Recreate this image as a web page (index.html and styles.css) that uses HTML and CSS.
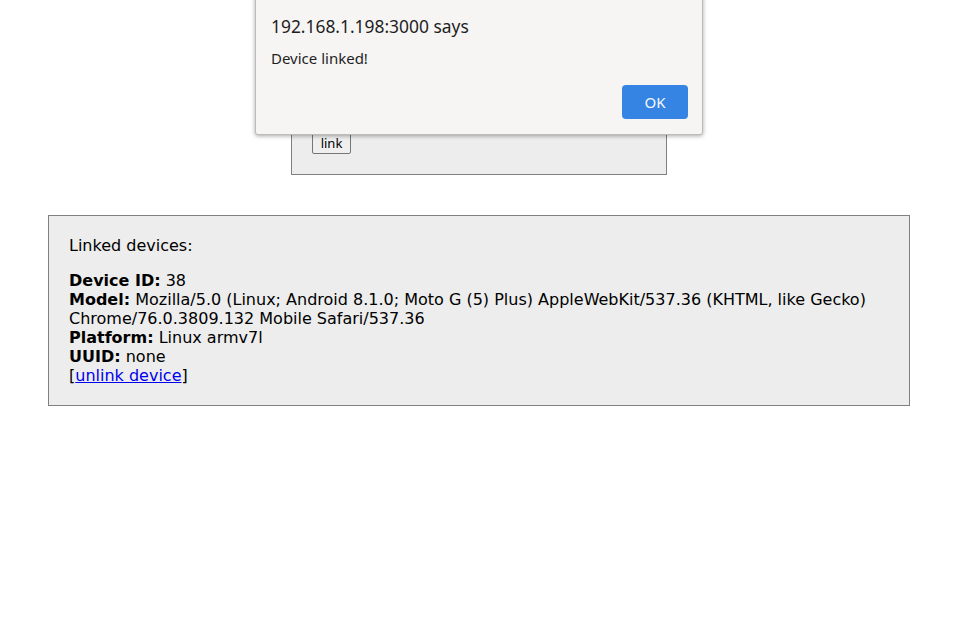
FILE: index.html
```html
<!DOCTYPE html>
<html>
<head>
<meta charset="utf-8">
<title>Devices</title>
<link rel="stylesheet" href="styles.css">
</head>
<body>
  <div class="panel link-panel">
    <p class="intro">Link a new device:</p>
    <input class="code" type="text" value="">
    <button class="btn" type="button">link</button>
  </div>

  <div class="panel devices">
    <p class="intro">Linked devices:</p>
    <div class="device">
      <b>Device ID:</b> 38<br>
      <b>Model:</b> Mozilla/5.0 (Linux; Android 8.1.0; Moto G (5) Plus) AppleWebKit/537.36 (KHTML, like Gecko) Chrome/76.0.3809.132 Mobile Safari/537.36<br>
      <b>Platform:</b> Linux armv7l<br>
      <b>UUID:</b> none<br>
      [<a href="#">unlink device</a>]
    </div>
  </div>

  <div class="dialog">
    <div class="dlg-title">192.168.1.198:3000 says</div>
    <div class="dlg-msg">Device linked!</div>
    <div class="dlg-actions">
      <button class="dlg-ok" type="button">OK</button>
    </div>
  </div>
</body>
</html>
```

FILE: styles.css
```css
html, body {
  margin: 0;
  padding: 0;
  background: #ffffff;
}
body {
  padding: 8px 0 0;
  font-family: "DejaVu Sans", sans-serif;
  font-size: 16px;
  line-height: 19px;
  color: #000;
}
.panel {
  background: #ededed;
  border: 1px solid #808080;
  padding: 20px;
}
.link-panel {
  width: 334px;
  margin: 0 auto;
}
.devices {
  margin: 40px 48px 0;
}
.intro {
  margin: 0 0 16px;
}
.code {
  display: block;
  box-sizing: border-box;
  height: 28px;
  width: 200px;
  margin: 0 0 40px;
}
.btn {
  display: block;
  font-family: "Noto Sans", sans-serif;
  font-size: 13px;
  line-height: 18px;
  padding: 1px 6px 1px;
  background: #efefef;
  border: 1px solid #767676;
  border-radius: 2px;
  color: #000;
  height: 22px;
  width: 39px;
}
a {
  color: #0000ee;
  text-decoration: underline;
}
.dialog {
  position: absolute;
  left: 255px;
  top: -6px;
  width: 448px;
  height: 141px;
  box-sizing: border-box;
  background: #f6f5f4;
  border: 1px solid #bdbbb8;
  border-radius: 0 0 3px 3px;
  box-shadow: 0 1px 4px rgba(0, 0, 0, 0.35);
  font-family: "Noto Sans", sans-serif;
  color: #1e1e1e;
  padding: 0 14px 0 15px;
  display: flex;
  flex-direction: column;
}
.dlg-title {
  margin-top: 18px;
  font-size: 17.4px;
  line-height: 26px;
}
.dlg-msg {
  margin-top: 9px;
  font-size: 15px;
  line-height: 20px;
}
.dlg-actions {
  margin-top: 17px;
  display: flex;
  justify-content: flex-end;
}
.dlg-ok {
  width: 66px;
  height: 34px;
  border: none;
  border-radius: 4px;
  background: #3584e4;
  color: #f4f8fd;
  font-family: "Noto Sans", sans-serif;
  font-size: 15px;
  padding: 0;
}
```
